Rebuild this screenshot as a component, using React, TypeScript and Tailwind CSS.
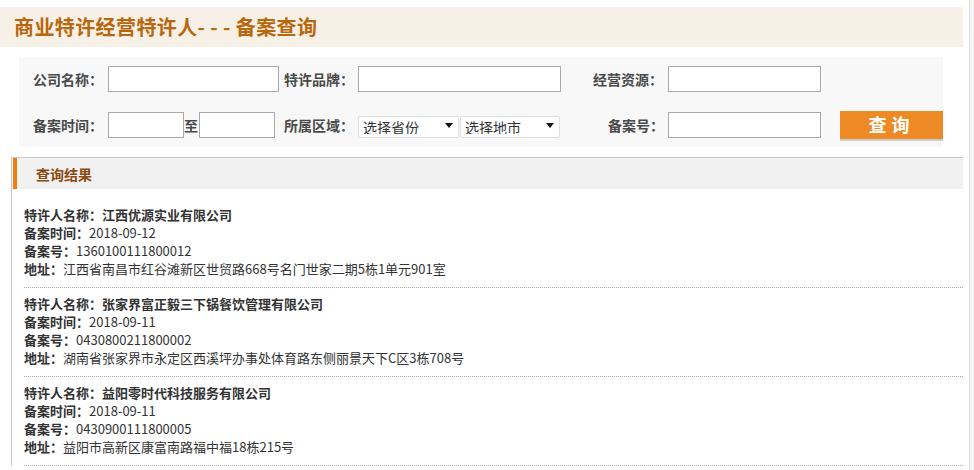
import type { ReactNode } from "react"

type Record = {
  name: string
  date: string
  no: string
  address: string
}

const records: Record[] = [
  {
    name: "江西优源实业有限公司",
    date: "2018-09-12",
    no: "1360100111800012",
    address: "江西省南昌市红谷滩新区世贸路668号名门世家二期5栋1单元901室",
  },
  {
    name: "张家界富正毅三下锅餐饮管理有限公司",
    date: "2018-09-11",
    no: "0430800211800002",
    address: "湖南省张家界市永定区西溪坪办事处体育路东侧丽景天下C区3栋708号",
  },
  {
    name: "益阳零时代科技服务有限公司",
    date: "2018-09-11",
    no: "0430900111800005",
    address: "益阳市高新区康富南路福中福18栋215号",
  },
]

const cjk = "font-['Noto_Sans_CJK_SC','Noto_Sans',sans-serif]"

function Label({ children, className = "" }: { children: ReactNode; className?: string }) {
  return (
    <span className={`shrink-0 text-[14px] leading-none font-bold text-[#4a4a4a] ${className}`}>
      {children}
    </span>
  )
}

function TextBox({ className = "" }: { className?: string }) {
  return (
    <input
      type="text"
      className={`h-[26px] shrink-0 border border-[#a9a9a9] bg-white px-1 text-[13px] outline-none ${className}`}
    />
  )
}

function Dropdown({ placeholder, className = "" }: { placeholder: string; className?: string }) {
  return (
    <div className={`relative h-[22px] shrink-0 ${className}`}>
      <select className="h-full w-full appearance-none rounded-[2px] border border-[#dcdfe4] bg-white pl-[4px] text-[14px] leading-none text-[#333] outline-none">
        <option>{placeholder}</option>
      </select>
      {/* arrow */}
      <svg
        className="pointer-events-none absolute right-[6px] top-[9px]"
        width="8"
        height="5"
        viewBox="0 0 8 5"
      >
        <path d="M0 0h8L4 5z" fill="#111" />
      </svg>
    </div>
  )
}

function Line({ label, value, bold = false }: { label: string; value: string; bold?: boolean }) {
  return (
    <div className="h-[18px] leading-[18px] whitespace-nowrap">
      <span className="font-bold">{label}：</span>
      <span className={bold ? "font-bold" : "font-normal"}>{value}</span>
    </div>
  )
}

export default function App() {
  return (
    <div className={`flex min-h-[470px] w-full bg-white ${cjk}`}>
      <div className="w-[963px] shrink-0 pt-[7px]">
        {/* Title */}
        <div className="flex h-[40px] items-center bg-[#f7f0e6] pl-[14px]">
          <h1 className="text-[20px] leading-none font-bold tracking-[0.4px] text-[#b9660d]">
            商业特许经营特许人- - - 备案查询
          </h1>
        </div>

        {/* Search form */}
        <div className="mt-[10px] ml-[19px] w-[924px] bg-[#f8f8f8] pt-[9px] pb-[9px] pl-[14px]">
          <div className="flex h-[26px] items-center">
            <Label className="w-[75px]">公司名称：</Label>
            <TextBox className="w-[171px]" />
            <Label className="ml-[5px] w-[74px]">特许品牌：</Label>
            <TextBox className="w-[203px]" />
            <Label className="ml-[32px] w-[75px]">经营资源：</Label>
            <TextBox className="w-[153px]" />
          </div>
          <div className="mt-[20px] flex h-[26px] items-center">
            <Label className="w-[75px]">备案时间：</Label>
            <TextBox className="w-[76px]" />
            <span className="w-[15px] shrink-0 text-[14px] leading-none font-bold text-[#4a4a4a]">至</span>
            <TextBox className="w-[76px]" />
            <Label className="ml-[9px] w-[74px]">所属区域：</Label>
            <Dropdown placeholder="选择省份" className="w-[101px]" />
            <Dropdown placeholder="选择地市" className="ml-[1px] w-[100px]" />
            <Label className="ml-[48px] w-[60px]">备案号：</Label>
            <TextBox className="w-[153px]" />
            <button className="ml-[19px] h-[28px] w-[103px] shrink-0 bg-[#ee8a25] pb-[2px] text-[18px] leading-none font-bold tracking-[5px] text-white shadow-[0_2px_0_#cccccc]">
              查询
            </button>
          </div>
        </div>

        {/* Results */}
        <div className="mt-[10px] ml-[11px] border-t border-l border-[#c8c8c8]">
          <div className="ml-px flex h-[31px] items-center border-l-[4px] border-[#ee7d14] bg-[#f1f1f1] pl-[19px]">
            <span className="text-[14px] leading-none font-bold text-[#8a4a12]">查询结果</span>
          </div>
          <div className="pt-[10px] pl-[12px] text-[13px] text-[#333]">
            {records.map((r) => (
              <div key={r.no} className="border-b border-dotted border-[#a8a8a8] pt-[7px] pb-[9px]">
                <Line label="特许人名称" value={r.name} bold />
                <Line label="备案时间" value={r.date} />
                <Line label="备案号" value={r.no} />
                <Line label="地址" value={r.address} />
              </div>
            ))}
          </div>
        </div>
      </div>
      <div className="flex-1" />
      {/* scrollbar edge */}
      <div className="w-[5px] shrink-0 border-l border-[#dedede] bg-[#f4f4f4]" />
    </div>
  )
}
